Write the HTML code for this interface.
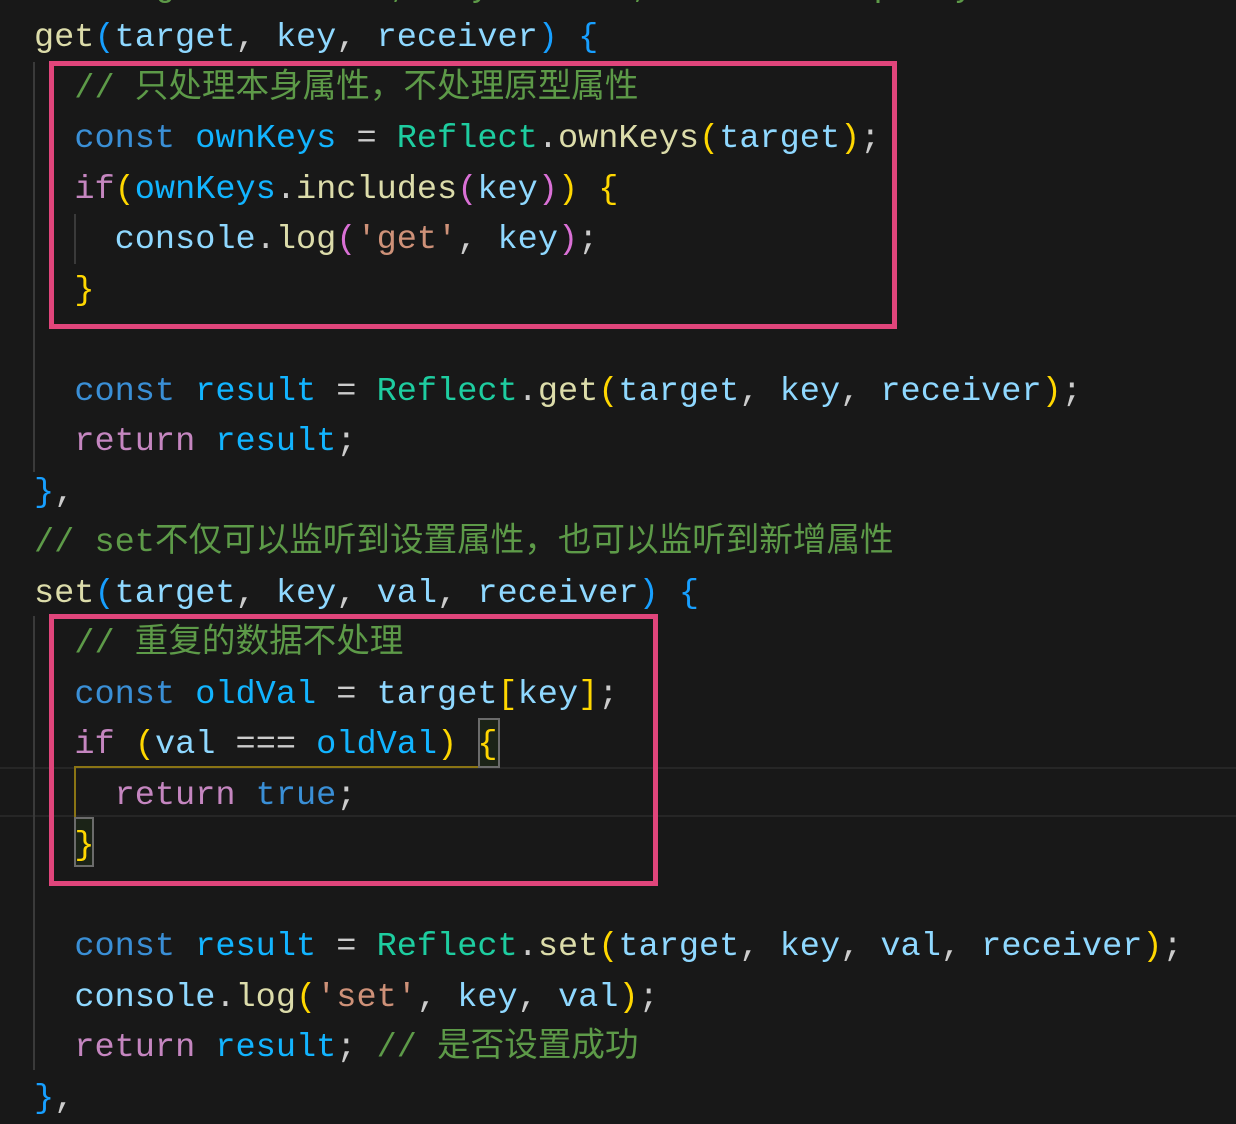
<!DOCTYPE html>
<html><head><meta charset="utf-8"><style>
html,body{margin:0;padding:0;background:#181818;width:1236px;height:1124px;overflow:hidden;position:relative}
.code{position:absolute;left:34px;top:-37.5px;font-family:"Liberation Mono","Noto Sans CJK SC",monospace;font-size:33.6px;line-height:50.5px;color:#cccccc;z-index:2}
.l{height:50.5px;white-space:pre}
.c{color:#5d9a48}.fn{color:#dcdcaa}.p{color:#8fd8ff}.k{color:#3a8fd6}.v{color:#12b4ff}.cl{color:#1ecda0}
.kw{color:#c586c0}.s{color:#ce9178}.y{color:#ffd700}.o{color:#da70d6}.b{color:#179fff}.t{color:#3a8fd6}
.box{position:absolute;border:5px solid #e0457b;box-sizing:border-box;z-index:3}
.g{position:absolute;width:2px;background:#3a3a3a}
.hl{position:absolute;left:0;width:1236px;height:2px;background:#262626}
.bm{position:absolute;border:2px solid #6b6b6b;background:#1b2317;box-sizing:border-box;z-index:1}
</style></head><body>
<div class="hl" style="top:767px"></div>
<div class="hl" style="top:815px"></div>
<div class="g" style="left:33px;top:62px;height:410px"></div>
<div class="g" style="left:33px;top:616px;height:454px"></div>
<div class="g" style="left:74px;top:214px;height:50px"></div>
<div style="position:absolute;left:74px;top:766px;width:405px;height:2px;background:#8a7414"></div>
<div style="position:absolute;left:74px;top:766px;width:2px;height:52px;background:#8a7414"></div>
<div class="bm" style="left:478px;top:718px;width:22px;height:50px"></div>
<div class="bm" style="left:74px;top:817px;width:20px;height:50px"></div>
<div class="box" style="left:49px;top:61px;width:848px;height:268px"></div>
<div class="box" style="left:49px;top:614px;width:609px;height:272px"></div>
<div class="code"><div class="l c">// target: 目标对象, key: 属性名, receiver: proxy</div><div class="l"><span class="fn">get</span><span class="b">(</span><span class="p">target</span>, <span class="p">key</span>, <span class="p">receiver</span><span class="b">)</span> <span class="b">{</span></div><div class="l c">  // 只处理本身属性，不处理原型属性</div><div class="l">  <span class="k">const</span> <span class="v">ownKeys</span> = <span class="cl">Reflect</span>.<span class="fn">ownKeys</span><span class="y">(</span><span class="p">target</span><span class="y">)</span>;</div><div class="l">  <span class="kw">if</span><span class="y">(</span><span class="v">ownKeys</span>.<span class="fn">includes</span><span class="o">(</span><span class="p">key</span><span class="o">)</span><span class="y">)</span> <span class="y">{</span></div><div class="l">    <span class="p">console</span>.<span class="fn">log</span><span class="o">(</span><span class="s">'get'</span>, <span class="p">key</span><span class="o">)</span>;</div><div class="l">  <span class="y">}</span></div><div class="l"> </div><div class="l">  <span class="k">const</span> <span class="v">result</span> = <span class="cl">Reflect</span>.<span class="fn">get</span><span class="y">(</span><span class="p">target</span>, <span class="p">key</span>, <span class="p">receiver</span><span class="y">)</span>;</div><div class="l">  <span class="kw">return</span> <span class="v">result</span>;</div><div class="l"><span class="b">}</span>,</div><div class="l c">// set不仅可以监听到设置属性，也可以监听到新增属性</div><div class="l"><span class="fn">set</span><span class="b">(</span><span class="p">target</span>, <span class="p">key</span>, <span class="p">val</span>, <span class="p">receiver</span><span class="b">)</span> <span class="b">{</span></div><div class="l c">  // 重复的数据不处理</div><div class="l">  <span class="k">const</span> <span class="v">oldVal</span> = <span class="p">target</span><span class="y">[</span><span class="p">key</span><span class="y">]</span>;</div><div class="l">  <span class="kw">if</span> <span class="y">(</span><span class="p">val</span> === <span class="v">oldVal</span><span class="y">)</span> <span class="y">{</span></div><div class="l">    <span class="kw">return</span> <span class="t">true</span>;</div><div class="l">  <span class="y">}</span></div><div class="l"> </div><div class="l">  <span class="k">const</span> <span class="v">result</span> = <span class="cl">Reflect</span>.<span class="fn">set</span><span class="y">(</span><span class="p">target</span>, <span class="p">key</span>, <span class="p">val</span>, <span class="p">receiver</span><span class="y">)</span>;</div><div class="l">  <span class="p">console</span>.<span class="fn">log</span><span class="y">(</span><span class="s">'set'</span>, <span class="p">key</span>, <span class="p">val</span><span class="y">)</span>;</div><div class="l">  <span class="kw">return</span> <span class="v">result</span>; <span class="c">// 是否设置成功</span></div><div class="l"><span class="b">}</span>,</div></div>
</body></html>
